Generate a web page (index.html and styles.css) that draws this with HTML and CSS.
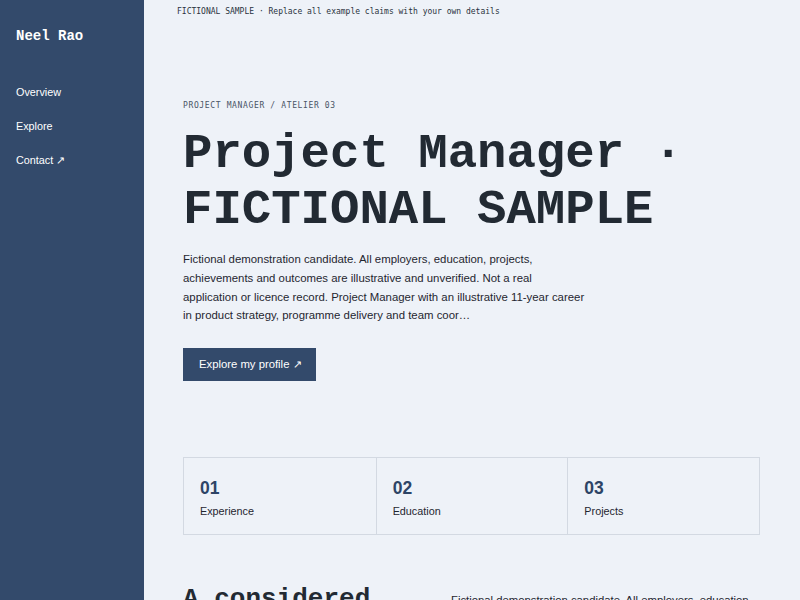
FILE: index.html
```html
<!DOCTYPE html>
<html lang="en">
<head>
<meta charset="utf-8">
<title>Neel Rao — Project Manager</title>
<link rel="stylesheet" href="styles.css">
</head>
<body>
<div class="layout">
  <aside class="sidebar">
    <div class="brand">Neel Rao</div>
    <nav class="nav">
      <a href="#overview">Overview</a>
      <a href="#explore">Explore</a>
      <a href="#contact">Contact ↗</a>
    </nav>
  </aside>
  <main class="main">
    <div class="banner">FICTIONAL SAMPLE · Replace all example claims with your own details</div>
    <section class="hero">
      <div class="eyebrow">PROJECT MANAGER / ATELIER 03</div>
      <h1 class="title">Project Manager · FICTIONAL SAMPLE</h1>
      <p class="lead">Fictional demonstration candidate. All employers, education, projects, achievements and outcomes are illustrative and unverified. Not a real application or licence record. Project Manager with an illustrative 11-year career in product strategy, programme delivery and team coor…</p>
      <a class="button" href="#explore">Explore my profile ↗</a>
    </section>
    <section class="stats">
      <div class="stat"><div class="num">01</div><div class="label">Experience</div></div>
      <div class="stat"><div class="num">02</div><div class="label">Education</div></div>
      <div class="stat"><div class="num">03</div><div class="label">Projects</div></div>
    </section>
    <section class="about">
      <h2 class="about-title">A considered approach</h2>
      <p class="about-text">Fictional demonstration candidate. All employers, education, projects, achievements and outcomes are illustrative and unverified.</p>
    </section>
  </main>
</div>
</body>
</html>
```
FILE: styles.css
```css
* { box-sizing: border-box; }
html, body { margin: 0; padding: 0; }
body {
  background: #eef2f8;
  color: #1f2630;
  font-family: "Liberation Sans", Arial, sans-serif;
  height: 600px;
  overflow: hidden;
}
.layout {
  display: flex;
  min-height: 600px;
}
.sidebar {
  width: 144px;
  flex: 0 0 144px;
  background: #334a6b;
  color: #ffffff;
  padding: 28px 16px;
}
.brand {
  font-family: "Liberation Mono", "Courier New", monospace;
  font-weight: bold;
  font-size: 14px;
  line-height: 16px;
}
.nav {
  display: flex;
  flex-direction: column;
  gap: 17px;
  margin-top: 40px;
}
.nav a {
  color: #ffffff;
  text-decoration: none;
  font-size: 10.8px;
  line-height: 17px;
}
.main {
  flex: 1;
  padding: 0 40px 0 39px;
}
.banner {
  font-family: "DejaVu Sans Mono", monospace;
  font-size: 8px;
  line-height: 12px;
  color: #2a3240;
  padding-top: 6px;
  margin-left: -6px;
}
.hero {
  padding-top: 82px;
}
.eyebrow {
  font-family: "DejaVu Sans Mono", monospace;
  font-size: 8px;
  letter-spacing: 0.64px;
  line-height: 12px;
  color: #4a5566;
}
.title {
  font-family: "Liberation Mono", "Courier New", monospace;
  font-weight: bold;
  font-size: 49px;
  line-height: 56px;
  margin: 14px 0 0;
  color: #222a33;
}
.lead {
  font-size: 11.4px;
  line-height: 18.8px;
  max-width: 404px;
  margin: 12px 0 0;
  color: #1f2630;
}
.button {
  display: inline-block;
  margin-top: 23px;
  background: #334a6b;
  color: #ffffff;
  text-decoration: none;
  font-size: 11.3px;
  line-height: 33px;
  height: 33px;
  padding: 0 14px 0 16px;
}
.stats {
  display: grid;
  grid-template-columns: repeat(3, 1fr);
  margin-top: 76px;
  border: 1px solid #d3d9e2;
}
.stat {
  padding: 20px 16px 16px;
  border-left: 1px solid #d3d9e2;
  height: 76px;
}
.stat:first-child { border-left: none; }
.num {
  font-weight: bold;
  font-size: 17.5px;
  line-height: 20px;
  color: #2d4466;
}
.label {
  font-size: 10.8px;
  line-height: 14px;
  margin-top: 6px;
  color: #1f2630;
}
.about {
  display: grid;
  grid-template-columns: 236px 1fr;
  gap: 32px;
  margin-top: 49px;
}
.about-title {
  font-family: "Liberation Mono", "Courier New", monospace;
  font-weight: bold;
  font-size: 26px;
  line-height: 30px;
  margin: 0;
  color: #222a33;
}
.about-text {
  font-size: 11.3px;
  line-height: 18.8px;
  margin: 7px 0 0;
}
```
